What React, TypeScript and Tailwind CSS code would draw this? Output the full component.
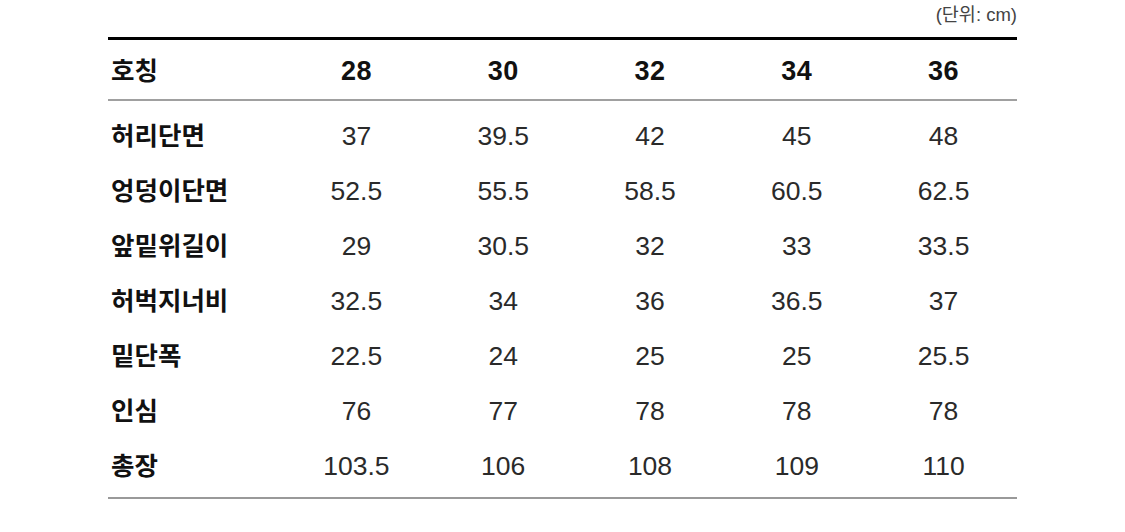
const sizes = ["28", "30", "32", "34", "36"];

const rows: { label: string; values: string[] }[] = [
  { label: "허리단면", values: ["37", "39.5", "42", "45", "48"] },
  { label: "엉덩이단면", values: ["52.5", "55.5", "58.5", "60.5", "62.5"] },
  { label: "앞밑위길이", values: ["29", "30.5", "32", "33", "33.5"] },
  { label: "허벅지너비", values: ["32.5", "34", "36", "36.5", "37"] },
  { label: "밑단폭", values: ["22.5", "24", "25", "25", "25.5"] },
  { label: "인심", values: ["76", "77", "78", "78", "78"] },
  { label: "총장", values: ["103.5", "106", "108", "109", "110"] },
];

export default function App() {
  return (
    <div
      className="w-[1125px] h-[532px] bg-white"
      style={{ fontFamily: '"Liberation Sans", "Noto Sans CJK KR", sans-serif' }}
    >
      <div className="ml-[108px] w-[909px]">
        {/* Unit note */}
        <div className="h-[37px] pt-[2px] text-right text-[18.5px] leading-[26px] text-[#444]">
          (단위: cm)
        </div>

        {/* Size table */}
        <div className="border-t-[3px] border-b-2 border-t-black border-b-[#999]">
          <div className="grid h-[61px] grid-cols-[175px_repeat(5,1fr)] items-center border-b-2 border-[#a0a0a0] pt-[4px] text-[#111]">
            <div className="pl-[3px] text-[25.5px] font-bold">호칭</div>
            {sizes.map((s) => (
              <div key={s} className="text-center text-[27px] font-bold tracking-[0.5px]">
                {s}
              </div>
            ))}
          </div>

          <div className="pt-[6px] pb-[5px]">
            {rows.map((row) => (
              <div
                key={row.label}
                className="grid h-[55px] grid-cols-[175px_repeat(5,1fr)] items-center pt-[4px]"
              >
                <div className="pl-[3px] text-[25.5px] font-bold text-[#111]">
                  {row.label}
                </div>
                {row.values.map((v, i) => (
                  <div key={i} className="text-center text-[26.5px] text-[#2a2a2a]">
                    {v}
                  </div>
                ))}
              </div>
            ))}
          </div>
        </div>
      </div>
    </div>
  );
}
